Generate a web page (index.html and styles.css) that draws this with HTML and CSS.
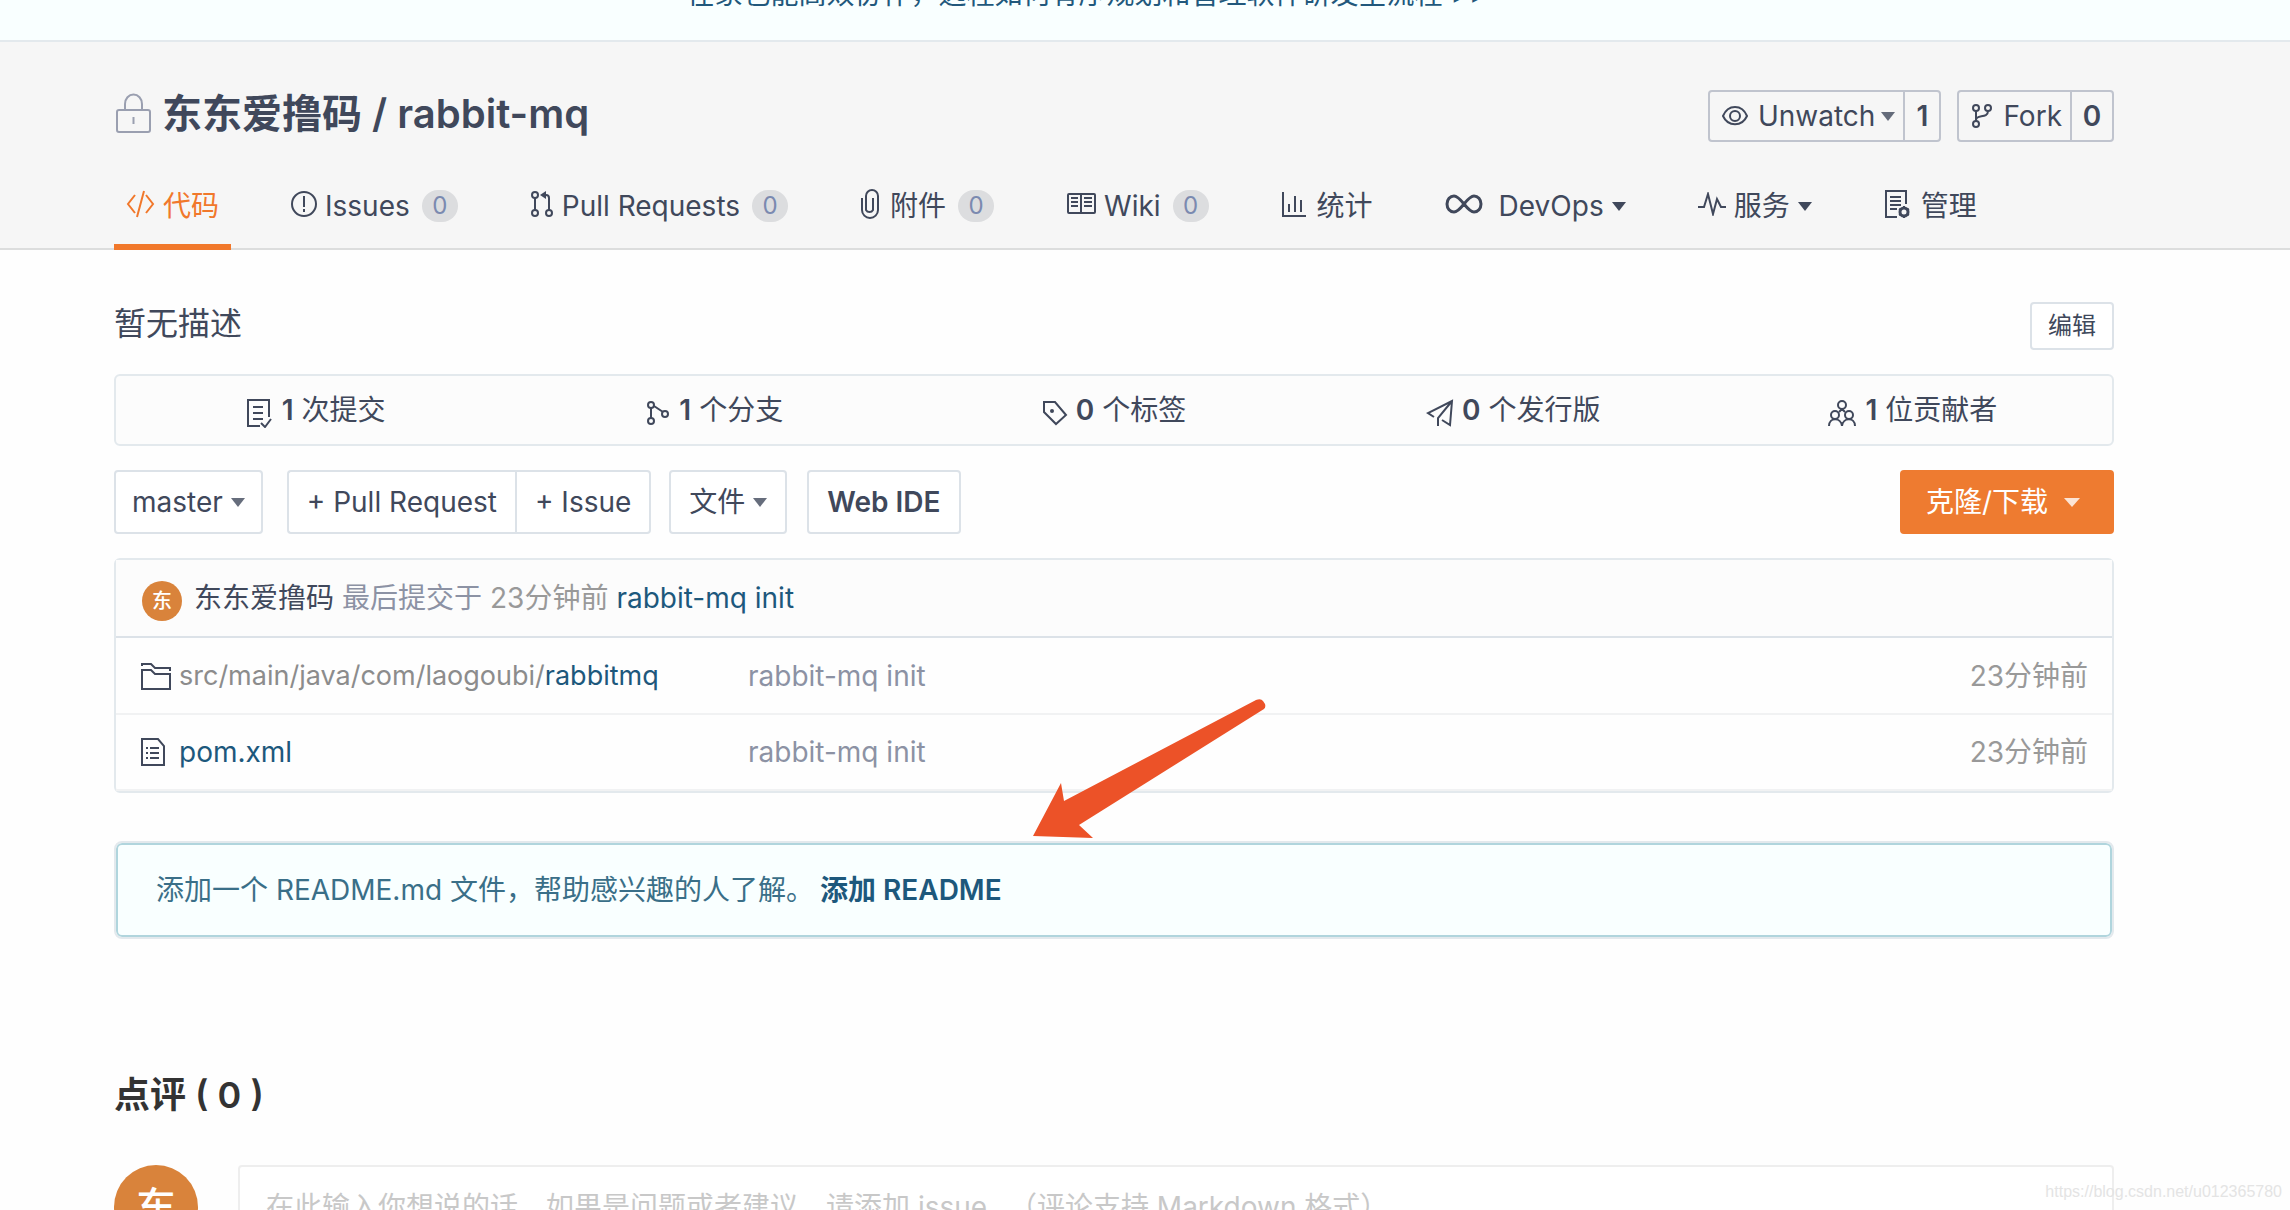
FILE: index.html
```html
<!DOCTYPE html>
<html lang="zh-CN">
<head>
<meta charset="utf-8">
<meta name="viewport" content="width=device-width, initial-scale=1">
<title>东东爱撸码 / rabbit-mq</title>
<link rel="stylesheet" href="styles.css">
</head>
<body>
<div class="banner"><a href="#">在家也能高效协作，远程如何有序规划和管理软件研发全流程 &gt;&gt;</a></div>

<header class="repo-header">
  <div class="title-row">
    <h1 class="repo-title">
      <svg class="icon lock" width="38" height="42" viewBox="0 0 38 42"><rect x="3" y="17" width="33" height="22" rx="2"/><path d="M11 17v-6a8.500 9.500 0 0 1 17 0v6M19.500 24v7"/></svg>
      <span><a href="#">东东爱撸码</a> / <a href="#">rabbit-mq</a></span>
    </h1>
    <div class="actions">
      <div class="counter">
        <button type="button" class="counter-main"><svg class="icon" width="26" height="22" viewBox="0 0 26 22"><path d="M1 11c5-12 19-12 24 0c-5 11-19 11-24 0z"/><circle cx="13" cy="11" r="5"/></svg><span class="push">Unwatch</span><i class="caret soft"></i></button>
        <a href="#" class="counter-num">1</a>
      </div>
      <div class="counter">
        <button type="button" class="counter-main"><svg class="icon" width="22" height="24" viewBox="0 0 22 24"><circle cx="5" cy="4" r="3"/><circle cx="5" cy="20" r="3"/><circle cx="17" cy="4" r="3"/><path d="M5 7v10M17 7c0 8-12 3-12 9"/></svg><span class="push">Fork</span></button>
        <a href="#" class="counter-num wide">0</a>
      </div>
    </div>
  </div>
  <nav class="tabs">
    <a href="#" class="tab active"><svg class="icon" width="29" height="28" viewBox="0 0 29 28"><path d="M9 5L2 14l7 9M20 5l7 9l-7 9M18 1l-7 26"/></svg><span>代码</span></a>
    <a href="#" class="tab"><svg class="icon" width="26" height="28" viewBox="0 0 26 28"><circle cx="13" cy="14" r="12"/><path d="M13 6v11M13 19v3"/></svg><span>Issues</span><b class="badge">0</b></a>
    <a href="#" class="tab"><svg class="icon" width="24" height="28" viewBox="0 0 24 28"><circle cx="5" cy="5" r="3"/><circle cx="5" cy="23" r="3"/><circle cx="19" cy="23" r="3"/><path d="M5 8v12M19 20V8q0-3-3-3h-4"/><path class="solid" d="M16 1v8l-6-4z"/></svg><span>Pull Requests</span><b class="badge">0</b></a>
    <a href="#" class="tab"><svg class="icon" width="20" height="30" viewBox="0 0 20 30"><path d="M2 9v12a8 8 0 0 0 16 0V7a6 6 0 0 0-12 0v14a4 4 0 0 0 7 0V9"/></svg><span class="near">附件</span><b class="badge">0</b></a>
    <a href="#" class="tab"><svg class="icon" width="30" height="26" viewBox="0 0 30 26"><rect x="2" y="3" width="27" height="19" rx="1"/><path d="M15 3v20M5 7h7M5 11h7M5 15h7M18 7h8M18 11h8M18 15h8"/></svg><span>Wiki</span><b class="badge">0</b></a>
    <a href="#" class="tab"><svg class="icon" width="26" height="28" viewBox="0 0 26 28"><path d="M2 2v24h23M8 14v8M14 6v16M20 10v12"/></svg><span class="near">统计</span></a>
    <a href="#" class="tab"><svg class="icon thick" width="38" height="20" viewBox="0 0 38 20"><path d="M19 10c-4-5-7-8-10-8a7 8 0 0 0 0 16c3 0 6-3 10-8s7-8 10-8a7 8 0 0 1 0 16c-3 0-6-3-10-8z"/></svg><span class="far">DevOps</span><i class="caret"></i></a>
    <a href="#" class="tab"><svg class="icon" width="28" height="24" viewBox="0 0 28 24"><path d="M0 15h6l4-13l5 20l4-15l4 8h5"/></svg><span>服务</span><i class="caret"></i></a>
    <a href="#" class="tab"><svg class="icon" width="27" height="30" viewBox="0 0 27 30"><path d="M13 28H2V2h20v13M6 8h11M6 12h11M6 16h11M6 20h7"/><circle class="thick" cx="20" cy="23" r="4"/><path d="M20 17v2M20 27v2M15 20l2 1M23 25l2 1M15 26l2-1M23 21l2-1"/></svg><span class="near">管理</span></a>
  </nav>
</header>

<main class="content">
  <div class="desc-row">
    <p class="desc">暂无描述</p>
    <button type="button" class="btn small">编辑</button>
  </div>

  <ul class="stats">
    <li><a href="#"><svg class="icon" width="28" height="30" viewBox="0 0 28 30"><path d="M14 28H2V2h21v17M7 9h10M7 15h10M7 21h10M15 25l4 4l6-8"/></svg><b>1</b> 次提交</a></li>
    <li><a href="#"><svg class="icon" width="25" height="26" viewBox="0 0 25 26"><circle cx="5" cy="5" r="3"/><circle cx="5" cy="21" r="3"/><circle cx="19" cy="14" r="3"/><path d="M5 8v10M8 6l9 6"/></svg><b>1</b> 个分支</a></li>
    <li><a href="#"><svg class="icon" width="26" height="26" viewBox="0 0 26 26"><path d="M2 2h11l11 13l-10 9L2 12z"/><circle class="solid" cx="10" cy="11" r="2"/></svg><b>0</b> 个标签</a></li>
    <li><a href="#"><svg class="icon" width="28" height="28" viewBox="0 0 28 28"><path d="M8 18L2 14L26 2l-2 24l-8-5M12 27v-8L26 2"/></svg><b>0</b> 个发行版</a></li>
    <li><a href="#"><svg class="icon" width="30" height="28" viewBox="0 0 30 28"><circle cx="15" cy="6" r="4"/><circle cx="8" cy="16" r="4"/><circle cx="22" cy="16" r="4"/><path d="M2 27c0-9 12-9 13 0c1-9 13-9 13 0M15 10l-3 3M15 10l3 3"/></svg><b>1</b> 位贡献者</a></li>
  </ul>

  <div class="toolbar">
    <button type="button" class="btn branch">master<i class="caret soft"></i></button>
    <div class="btn-group">
      <button type="button" class="btn">+ Pull Request</button>
      <button type="button" class="btn">+ Issue</button>
    </div>
    <button type="button" class="btn files">文件<i class="caret soft"></i></button>
    <button type="button" class="btn strong">Web IDE</button>
    <button type="button" class="btn primary">克隆/下载<i class="caret"></i></button>
  </div>

  <section class="tree">
    <div class="commit">
      <span class="avatar">东</span>
      <a href="#" class="author">东东爱撸码</a>
      <span class="muted">最后提交于</span>
      <span class="time">23分钟前</span>
      <a href="#" class="link">rabbit-mq init</a>
    </div>
    <table class="files-table">
      <tr>
        <td class="name"><div><svg class="icon" width="32" height="30" viewBox="0 0 32 30"><path d="M2 5V3h9l4 4h15v3M2 9h9l4 4h15v15H2z"/></svg><span class="full-path"><a href="#" class="path">src/main/java/com/laogoubi/</a><a href="#" class="link">rabbitmq</a></span></div></td>
        <td class="message">rabbit-mq init</td>
        <td class="when">23分钟前</td>
      </tr>
      <tr>
        <td class="name"><div><svg class="icon" width="32" height="30" viewBox="0 0 32 30"><path d="M2 2h16l6 7v19H2zM10 11h9M10 16h9M10 21h9M6 11h2M6 16h2M6 21h2"/></svg><a href="#" class="link">pom.xml</a></div></td>
        <td class="message">rabbit-mq init</td>
        <td class="when">23分钟前</td>
      </tr>
    </table>
  </section>

  <section class="readme">
    <span>添加一个 README.md 文件，帮助感兴趣的人了解。</span>
    <a href="#">添加 README</a>
    <svg class="arrow" width="236" height="142" viewBox="0 0 236 142"><path d="M1 137L29 84l3 18L224 1q5-2 7 1l2 3q1 3-1 5L47 126l14 13z"/></svg>
  </section>

  <section class="comments">
    <h2>点评 ( 0 )</h2>
    <div class="comment-row">
      <span class="avatar large">东</span>
      <textarea class="comment-box" aria-label="点评" placeholder="在此输入你想说的话，如果是问题或者建议，请添加 issue 。（评论支持 Markdown 格式）"></textarea>
    </div>
  </section>
</main>
<div class="watermark">https://blog.csdn.net/u012365780</div>
</body>
</html>
```
FILE: styles.css
```css
* { box-sizing: border-box; }

body {
  margin: 0;
  height: 100vh;
  overflow: hidden;
  position: relative;
  background: #fefefe;
  color: #40485b;
  font: 28px/40px Inter, "Noto Sans CJK SC", sans-serif;
}

a { color: inherit; text-decoration: none; }
button { font: inherit; color: inherit; cursor: pointer; }
h1, h2, p, ul { margin: 0; padding: 0; }

.icon {
  flex: none;
  fill: none;
  stroke: currentColor;
  stroke-width: 2;
}
.icon .solid { fill: currentColor; stroke: none; }
.icon.thick, .icon .thick { stroke-width: 3; }

.caret {
  flex: none;
  border: 7px solid transparent;
  border-top: 9px solid currentColor;
  border-bottom: 0;
}
.caret.soft { opacity: .8; }

/* announcement, scrolled partly out of view */
.banner {
  margin-top: -54px;
  padding: 28px 176px 24px 60px;
  height: 96px;
  border-bottom: 2px solid #e3e9ed;
  background: #f9ffff;
  color: #22587c;
  text-align: center;
}

.repo-header {
  height: 208px;
  padding: 42px 176px 0 114px;
  border-bottom: 2px solid #dcdddd;
  background: #f6f6f6;
}
.title-row {
  display: flex;
  justify-content: space-between;
  align-items: center;
  height: 64px;
}
.repo-title {
  display: flex;
  align-items: center;
  gap: 10px;
  padding-bottom: 4px;
  font-size: 40px;
  font-weight: 600;
}
.lock { color: #9a9fb0; }

.actions { display: flex; gap: 16px; }
.counter {
  display: flex;
  height: 52px;
  border: 2px solid #c0c4ce;
  border-radius: 4px;
}
.counter-main {
  display: flex;
  align-items: center;
  padding: 0 8px 0 12px;
  border: 0;
  background: none;
}
.counter-main .push { margin: 0 6px 0 10px; }
.counter-main .push:last-child { margin-right: 0; }
.counter-num {
  padding: 4px 0;
  width: 36px;
  border-left: 2px solid #c0c4ce;
  font-weight: 600;
  text-align: center;
}
.counter-num.wide { width: 42px; }

.tabs { display: flex; gap: 48px; height: 102px; }
.tab {
  display: flex;
  align-items: center;
  gap: 8px;
  padding: 14px 12px 0;
}
.tab.active {
  padding-top: 20px;
  border-bottom: 6px solid #f1782b;
  color: #f1782b;
}
.tab .icon { margin-bottom: 4px; }
.tab .near { margin-left: 2px; }
.tab .far { margin-left: 8px; }
.badge {
  min-width: 36px;
  height: 32px;
  margin-left: 4px;
  border-radius: 16px;
  background: #dcdddf;
  color: #7b8ab0;
  font-size: 24px;
  font-weight: 400;
  line-height: 32px;
  text-align: center;
}

.content { padding: 52px 176px 0 114px; }

.btn {
  display: flex;
  align-items: center;
  justify-content: center;
  height: 64px;
  padding: 0 18px;
  border: 2px solid #dce2e8;
  border-radius: 4px;
  background: #fff;
}
.btn.small { height: 48px; padding: 0 16px; font-size: 24px; }

.desc-row { display: flex; justify-content: space-between; align-items: center; height: 48px; }
.desc { padding-bottom: 4px; font-size: 32px; }

.stats {
  display: grid;
  grid-template-columns: repeat(5, 1fr);
  height: 72px;
  margin-top: 24px;
  border: 2px solid #e3e9ed;
  border-radius: 6px;
  background: #fcfcfc;
  list-style: none;
}
.stats li, .stats a { display: flex; align-items: center; justify-content: center; }
.stats a { gap: 8px; }
.stats .icon { margin-top: 6px; }
.stats b { font-weight: 600; }

.toolbar { display: flex; margin-top: 24px; }
.btn.branch { gap: 8px; margin-right: 24px; padding: 0 16px; }
.btn-group { display: flex; margin-right: 18px; }
.btn-group .btn:first-child { border-right: 0; border-radius: 4px 0 0 4px; }
.btn-group .btn:last-child { border-radius: 0 4px 4px 0; }
.files { gap: 8px; margin-right: 20px; }
.strong { font-weight: 600; }
.btn.primary {
  gap: 16px;
  padding: 0 32px 0 24px;
  margin-left: auto;
  border-color: #ee7b30;
  background: #ee7b30;
  color: #fff;
}
.primary .caret { opacity: .8; border-width: 9px 8px 0; }

.tree {
  margin-top: 24px;
  border: 2px solid #e3e9ed;
  border-radius: 6px;
}
.commit {
  display: flex;
  align-items: center;
  gap: 8px;
  height: 78px;
  padding: 0 24px;
  border-bottom: 2px solid #dce2e8;
  background: #fcfcfc;
}
.avatar {
  width: 40px;
  height: 40px;
  margin: 6px 4px 0 2px;
  border-radius: 50%;
  background: #d9833b;
  color: #fff;
  font-size: 20px;
  font-weight: 500;
  text-align: center;
}
.muted, .message { color: #8c92a4; }
.time, .when { color: #999; }
.link { color: #1d587c; }
.path { color: #8c8c8c; }
.full-path { font-size: 27px; }

.files-table { width: 100%; table-layout: fixed; border-collapse: collapse; }
.files-table td { height: 76px; padding: 0 24px; border-bottom: 2px solid #f1f2f3; }
.name { width: 608px; }
.name div { display: flex; align-items: center; gap: 7px; }
.when { width: 300px; text-align: right; }

.readme {
  position: relative;
  display: flex;
  gap: 6px;
  margin: 50px 2px 0;
  padding: 25px 38px;
  border: 2px solid #b0d5dd;
  border-radius: 6px;
  outline: 2px solid #e3e9ed;
  background: #f9ffff;
  color: #3a6f88;
}
.readme a { color: #1d587c; font-weight: 600; }
.arrow { position: absolute; left: 914px; top: -146px; fill: #ec5228; }

.comments { margin-top: 138px; color: #333; }
.comments h2 { font-size: 36px; font-weight: 600; }
.comment-row { display: flex; gap: 40px; margin-top: 50px; }
.avatar.large {
  flex: none;
  width: 84px;
  height: 84px;
  margin: 0;
  font-size: 40px;
  line-height: 84px;
}
.comment-box {
  flex: 1;
  height: 200px;
  padding: 20px 26px;
  border: 2px solid #eee;
  border-radius: 4px;
  background: #fff;
  font: inherit;
  resize: none;
}
.comment-box::placeholder { color: #c8c8c8; }

.watermark {
  position: absolute;
  right: 8px;
  bottom: 6px;
  color: #e4e4e4;
  font: 16px/24px "Liberation Sans", sans-serif;
}
```
